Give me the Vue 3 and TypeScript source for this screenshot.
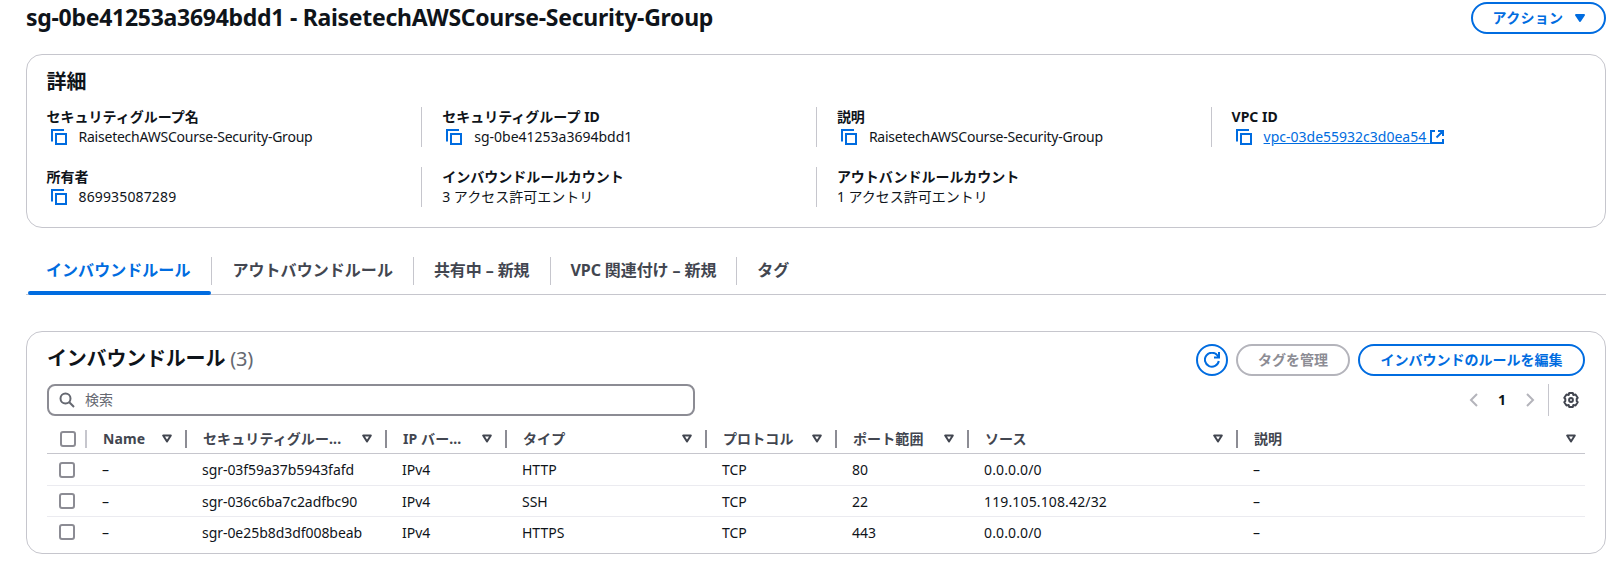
<script setup lang="ts">
import { ref } from 'vue'

interface Detail {
  label: string
  value: string
  copy?: boolean
  link?: boolean
  tone?: 'tight' | 'loose'
}
interface Rule {
  id: string
  ip: string
  type: string
  protocol: string
  port: string
  source: string
}

const details: Detail[] = [
  { label: 'セキュリティグループ名', value: 'RaisetechAWSCourse-Security-Group', copy: true, tone: 'tight' },
  { label: 'セキュリティグループ ID', value: 'sg-0be41253a3694bdd1', copy: true },
  { label: '説明', value: 'RaisetechAWSCourse-Security-Group', copy: true, tone: 'tight' },
  { label: 'VPC ID', value: 'vpc-03de55932c3d0ea54', copy: true, link: true },
  { label: '所有者', value: '869935087289', copy: true, tone: 'loose' },
  { label: 'インバウンドルールカウント', value: '3 アクセス許可エントリ' },
  { label: 'アウトバンドルールカウント', value: '1 アクセス許可エントリ' },
]

const tabs = ['インバウンドルール', 'アウトバウンドルール', '共有中 – 新規', 'VPC 関連付け – 新規', 'タグ']
const activeTab = ref(0)

const columns = ['Name', 'セキュリティグルー...', 'IP バー...', 'タイプ', 'プロトコル', 'ポート範囲', 'ソース', '説明']

const rules: Rule[] = [
  { id: 'sgr-03f59a37b5943fafd', ip: 'IPv4', type: 'HTTP', protocol: 'TCP', port: '80', source: '0.0.0.0/0' },
  { id: 'sgr-036c6ba7c2adfbc90', ip: 'IPv4', type: 'SSH', protocol: 'TCP', port: '22', source: '119.105.108.42/32' },
  { id: 'sgr-0e25b8d3df008beab', ip: 'IPv4', type: 'HTTPS', protocol: 'TCP', port: '443', source: '0.0.0.0/0' },
]
</script>

<template>
  <main class="page">
    <header class="page-head">
      <h1>sg-0be41253a3694bdd1 - RaisetechAWSCourse-Security-Group</h1>
      <button class="btn action">
        <span>アクション</span>
        <svg width="16" height="16" viewBox="0 0 16 16"><path d="M4 5h8l-4 6z" fill="currentColor" stroke="currentColor" stroke-width="2" stroke-linejoin="round" /></svg>
      </button>
    </header>

    <section class="panel details">
      <h2>詳細</h2>
      <div class="grid">
        <div v-for="(d, i) in details" :key="i" class="cell" :class="{ ruled: i % 4 !== 0 }">
          <div class="label">{{ d.label }}</div>
          <div class="value">
            <svg v-if="d.copy" class="copy" width="16" height="16" viewBox="0 0 16 16"><path d="M1 12.500V1h12M5 5h10v10H5z" fill="none" stroke="currentColor" stroke-width="2" /></svg>
            <a v-if="d.link" class="link"><span>{{ d.value }}&nbsp;</span><svg width="14" height="14" viewBox="0 0 14 14"><path d="M5 1H1v12h12V9M8 1h5v5M13 1L6.500 7.500" fill="none" stroke="currentColor" stroke-width="2" /></svg></a>
            <span v-else :class="d.tone">{{ d.value }}</span>
          </div>
        </div>
      </div>
    </section>

    <nav class="tabs">
      <button v-for="(t, i) in tabs" :key="t" class="tab" :class="{ active: i === activeTab, mixed: t.includes('–') }" @click="activeTab = i"><span>{{ t }}</span></button>
    </nav>

    <section class="panel rules">
      <div class="rules-head">
        <h2>インバウンドルール <span class="count">(3)</span></h2>
        <div class="buttons">
          <button class="btn round">
            <svg width="16" height="16" viewBox="0 0 16 16"><path d="M14.800 9A7 7 0 1 1 13.500 3.500L15 5.500M15 0v5.500h-5" fill="none" stroke="currentColor" stroke-width="2" /></svg>
          </button>
          <button class="btn muted manage">タグを管理</button>
          <button class="btn edit">インバウンドのルールを編集</button>
        </div>
      </div>
      <div class="tools">
        <label class="search">
          <svg width="16" height="16" viewBox="0 0 16 16"><g fill="none" stroke="currentColor" stroke-width="2"><circle cx="6.500" cy="6.500" r="5" /><path d="M10.300 10.300L15 15" /></g></svg>
          <span>検索</span>
        </label>
        <div class="pager">
          <svg class="arrow" width="16" height="16" viewBox="0 0 16 16"><path d="M11 2L5 8l6 6" fill="none" stroke="currentColor" stroke-width="2" /></svg>
          <b>1</b>
          <svg class="arrow" width="16" height="16" viewBox="0 0 16 16"><path d="M5 2l6 6-6 6" fill="none" stroke="currentColor" stroke-width="2" /></svg>
          <div class="settings">
            <svg width="16" height="16" viewBox="0 0 16 16"><g fill="none" stroke="currentColor" stroke-width="2" stroke-linejoin="round"><path d="M6.200 1h3.600l.5 1.900 2.200-.4 2.200 3.300L13.700 7v2l1 1.200-2.200 3.300-2.200-.4-.5 1.900H6.200l-.5-1.900-2.200.4-2.200-3.300L2.300 9V7l-1-1.200 2.200-3.300 2.200.4z" /><circle cx="8" cy="8" r="1.900" /></g></svg>
          </div>
        </div>
      </div>
      <table>
        <colgroup><col class="c0" /><col class="c1" /><col class="c2" /><col class="c3" /><col class="c4" /><col class="c5" /><col class="c6" /><col class="c7" /><col class="c8" /></colgroup>
        <thead>
          <tr>
            <th class="pick"><div class="th-in"><i class="box" /></div></th>
            <th v-for="c in columns" :key="c">
              <div class="th-in"><span>{{ c }}</span><svg width="10" height="9" viewBox="0 0 10 9"><path d="M1.200 1.500h7.600L5 7.500z" fill="none" stroke="currentColor" stroke-width="2" stroke-linejoin="round" /></svg></div>
            </th>
          </tr>
        </thead>
        <tbody>
          <tr v-for="r in rules" :key="r.id">
            <td class="pick"><i class="box" /></td>
            <td>–</td>
            <td class="id">{{ r.id }}</td>
            <td>{{ r.ip }}</td>
            <td>{{ r.type }}</td>
            <td>{{ r.protocol }}</td>
            <td>{{ r.port }}</td>
            <td class="loose">{{ r.source }}</td>
            <td>–</td>
          </tr>
        </tbody>
      </table>
    </section>
  </main>
</template>

<style>
body { margin: 0; background: #fff; }
</style>

<style scoped>
* { box-sizing: border-box; }
.page {
  width: 1621px; height: 570px; padding: 2px 15px 0 26px; overflow: hidden;
  font: 14px/20px "Noto Sans", "Noto Sans CJK JP", sans-serif; color: #0f141a;
}
h1, h2 { margin: 0; }
h1 { font-size: 23px; font-weight: bold; line-height: 30px; letter-spacing: -0.28px; white-space: nowrap; }
h2 { font-size: 20px; line-height: 24px; }
svg { flex: none; }
.page-head { display: flex; justify-content: space-between; height: 32px; }
.btn {
  display: flex; align-items: center; justify-content: center; height: 32px; padding: 0;
  border: 2px solid #006ce0; border-radius: 20px; background: #fff; color: #006ce0;
  font: bold 14px/20px "Noto Sans", "Noto Sans CJK JP", sans-serif; white-space: nowrap;
}
.action { width: 135px; gap: 9px; padding-left: 4px; letter-spacing: 0.3px; }
.panel { border: 1px solid #c6c6cd; border-radius: 16px; }
.details { height: 174px; margin-top: 20px; padding: 15px 20px 0 19.5px; }
.grid { display: grid; grid-template-columns: repeat(4, 374.7px); gap: 20px; margin: 13px 0 0; }
.cell { height: 40px; }
.cell.ruled { margin-left: -20px; border-left: 1px solid #c6c6cd; padding-left: 20px; }
.label { font-weight: bold; white-space: nowrap; }
.value { display: flex; align-items: center; height: 20px; white-space: nowrap; }
.copy { margin: 0 12px 0 4px; color: #006ce0; }
.tight { letter-spacing: -0.23px; }
.loose { letter-spacing: 0.14px; }
.link { display: flex; align-items: center; color: #006ce0; }
.link span { text-decoration: underline; }
.tabs { display: flex; height: 43px; margin-top: 24px; border-bottom: 1px solid #c6c6cd; }
.tab {
  position: relative; height: 42px; padding: 0; border: 0; background: none; color: #424650;
  font: bold 16px/20px "Noto Sans", "Noto Sans CJK JP", sans-serif; letter-spacing: 0.05px; white-space: nowrap;
}
.tab span { display: block; height: 28px; margin: 0 0 4px; padding: 3px 20px 5px; border-right: 1px solid #c6c6cd; }
.tab:first-child span { padding-right: 21px; }
.tab:last-child span { border: 0; }
.tab.mixed { letter-spacing: -0.1px; }
.tab.active { color: #006ce0; }
.tab.active::after { content: ""; position: absolute; left: 2px; right: 1px; bottom: -1px; height: 4px; border-radius: 2px; background: #006ce0; }
.rules { height: 223px; margin-top: 36px; padding: 12px 20px 0; }
.rules-head, .tools { display: flex; justify-content: space-between; height: 32px; }
.rules-head h2 { line-height: 30px; letter-spacing: -0.2px; }
.count { font-weight: normal; color: #656871; }
.buttons { display: flex; gap: 8px; }
.round { width: 32px; }
.manage { width: 114px; }
.edit { width: 227px; }
.muted { border-color: #b4b4bb; color: #8c8c94; }
.tools { margin-top: 8px; }
.search { display: flex; align-items: center; gap: 10px; width: 648px; padding: 0 0 1px 10px; border: 2px solid #8c8c94; border-radius: 8px; color: #656871; }
.pager { display: flex; align-items: center; color: #424650; }
.pager b { width: 40px; text-align: center; color: #0f141a; }
.arrow { color: #b4b4bb; }
.settings { display: flex; align-items: center; height: 32px; margin-left: 10px; padding: 0 6px 0 14px; border-left: 1px solid #c6c6cd; }
table { width: 1538px; margin: 8px 0 0; table-layout: fixed; border-collapse: separate; border-spacing: 0; }
.c0 { width: 40px; } .c1 { width: 100px; } .c2 { width: 200px; } .c3 { width: 120px; } .c4 { width: 200px; }
.c5 { width: 130px; } .c6 { width: 132px; } .c7 { width: 269px; } .c8 { width: 347px; }
th { height: 30px; padding: 0; border-bottom: 1px solid #c6c6cd; color: #424650; text-align: left; white-space: nowrap; }
.th-in { display: flex; align-items: center; justify-content: space-between; height: 18px; padding: 0 13px 0 16px; border-right: 2px solid #8c8c94; letter-spacing: 0.1px; }
th:last-child .th-in { border: 0; padding-right: 9px; }
th.pick .th-in { padding: 0 0 0 13px; border-color: #c6c6cd; }
td { height: 31px; padding: 1px 15px 0; border-bottom: 1px solid #ebebf0; white-space: nowrap; }
tbody tr:first-child td { height: 32px; }
td.id { letter-spacing: -0.05px; }
td.pick { padding: 0 0 0 12px; }
tbody tr:first-child td.pick { padding-top: 1px; }
tbody tr:last-child td { border-bottom-color: transparent; }
.box { display: block; flex: none; width: 16px; height: 16px; border: 2px solid #8c8c94; border-radius: 3px; }
</style>
